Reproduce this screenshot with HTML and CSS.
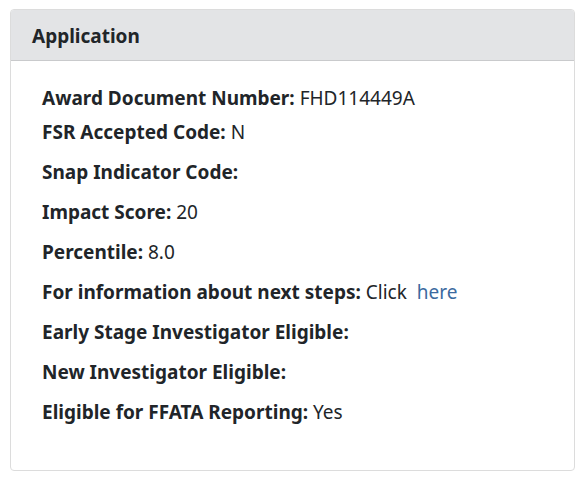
FILE: index.html
```html
<!DOCTYPE html>
<html lang="en">
<head>
    <meta charset="UTF-8">
    <meta name="viewport" content="width=device-width, initial-scale=1.0">
    <title>Application</title>
    <link rel="stylesheet" href="styles.css">
</head>
<body>
    <div class="card">
        <div class="card-header">Application</div>
        <div class="card-body">
            <div class="first-group">
                <div class="row"><b>Award Document Number:</b> FHD114449A</div>
                <div class="row"><b>FSR Accepted Code:</b> N</div>
            </div>
            <div class="row"><b>Snap Indicator Code:</b></div>
            <div class="row"><b>Impact Score:</b> 20</div>
            <div class="row"><b>Percentile:</b> 8.0</div>
            <div class="row"><b>For information about next steps:</b> Click &nbsp;<a href="#">here</a></div>
            <div class="row"><b>Early Stage Investigator Eligible:</b></div>
            <div class="row"><b>New Investigator Eligible:</b></div>
            <div class="row"><b>Eligible for FFATA Reporting:</b> Yes</div>
        </div>
    </div>
</body>
</html>
```

FILE: styles.css
```css
body{
    margin: 0;
    padding: 9px 0 0 10px;
    font-family: "Noto Sans", "Open Sans", sans-serif;
    color: #212529;
    background-color: white;
}
.card{
    width: 565px;
    height: 462px;
    box-sizing: border-box;
    border: 1px solid #dcdcdc;
    border-radius: 4px;
    overflow: hidden;
}
.card-header{
    background-color: #e3e4e6;
    border-bottom: 1px solid #c9cacc;
    height: 51px;
    box-sizing: border-box;
    padding: 14px 21px 12px;
    font-size: 19px;
    font-weight: bold;
    line-height: 24px;
}
.card-body{
    padding: 25px 31px;
    font-size: 19px;
}
.row{
    line-height: 24px;
    margin-bottom: 16px;
}
.first-group .row{
    margin-bottom: 10px;
}
.first-group{
    margin-bottom: 16px;
}
.first-group .row:last-child{
    margin-bottom: 0;
}
a{
    color: #3b6aa0;
    text-decoration: none;
}
```
